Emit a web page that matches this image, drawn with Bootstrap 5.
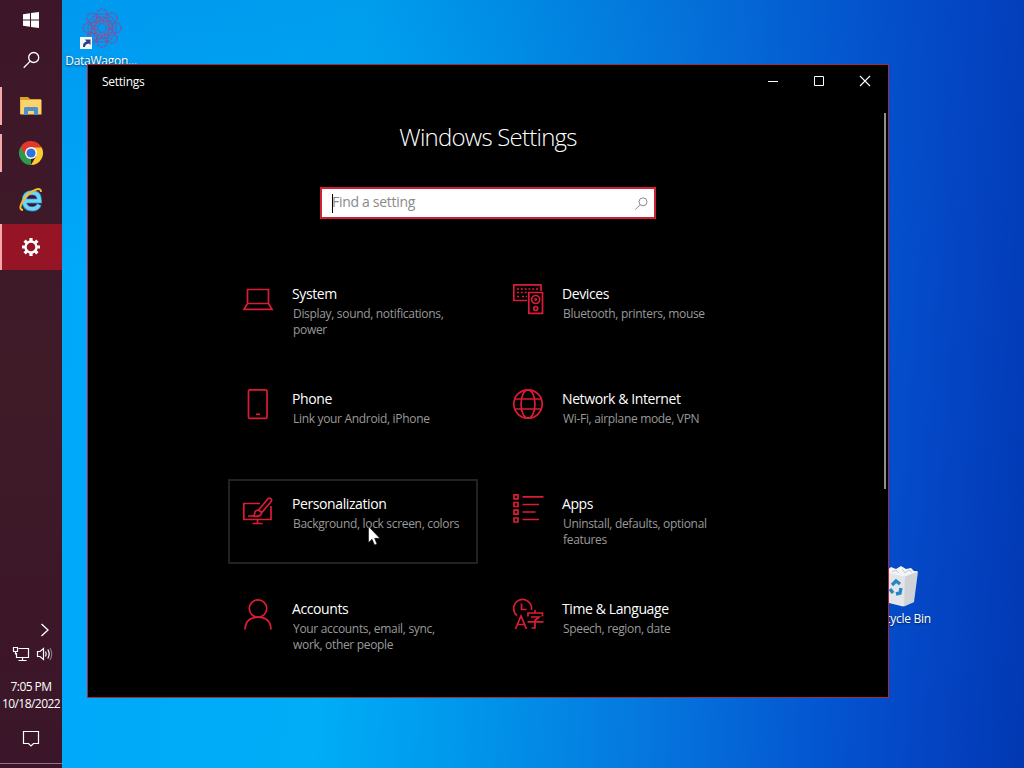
<!DOCTYPE html>
<html lang="en">
  <head>
    <meta charset="UTF-8" />
    <meta name="viewport" content="width=device-width, initial-scale=1.0" />
    <title>Windows Settings</title>
    <link
      href="https://cdn.jsdelivr.net/npm/bootstrap@5.3.0/dist/css/bootstrap.min.css"
      rel="stylesheet"
    />
    <style>
      body {
        height: 768px;
        font-family: "Open Sans", "Noto Sans", "Liberation Sans", sans-serif;
        font-size: 12px;
        line-height: 16px;
        color: #fff;
        background: #0a6fe0;
      }
      svg {
        display: block;
        flex: none;
        overflow: visible;
      }

      /* taskbar */
      .taskbar {
        width: 62px;
        background: linear-gradient(#3d1729, #3f1a27 50%, #3b1529);
      }
      .task-item {
        height: 46px;
        margin-top: 1px;
      }
      .task-start,
      .task-search {
        height: 40px;
      }
      .task-search {
        margin-bottom: 2px;
      }
      .task-open {
        background: linear-gradient(#f7a8a8, #f7a8a8) no-repeat left center / 2px 38px;
      }
      .task-active {
        background: linear-gradient(to right, #f7a8a8 2px, #951526 2px);
      }
      .tray-icons {
        padding-top: 9px;
      }
      .tray-clock {
        line-height: 17px;
        letter-spacing: -0.55px;
        padding-top: 16px;
        margin-bottom: -2px;
        white-space: nowrap;
      }
      .tray-line {
        height: 1px;
        background: #8c7480;
        margin-bottom: 4px;
      }

      /* desktop */
      .desktop {
        background:
          linear-gradient(to bottom, rgba(0, 60, 180, 0.14), rgba(0, 60, 180, 0) 35%),
          linear-gradient(94deg, #00a8fa 0%, #00adf6 30%, #0098ec 44%, #0578de 62%, #0455d0 80%, #0445c4 90%, #0238b2 100%);
      }
      .desk-icon {
        width: 78px;
        letter-spacing: -0.25px;
        text-shadow: 0 1px 2px rgba(0, 0, 0, 0.6);
      }
      .desk-app {
        left: 0;
        top: 7px;
      }
      .desk-bin {
        left: 800px;
        top: 563px;
      }

      /* settings window */
      .win {
        left: 25px;
        top: 64px;
        width: 802px;
        height: 634px;
        background: #000;
        border: 1px solid #a62844;
      }
      .win-bar {
        height: 32px;
        padding-left: 14px;
        letter-spacing: -0.25px;
      }
      .win-name {
        padding-top: 2px;
      }
      .win-btn {
        width: 46px;
        height: 32px;
      }
      .win-scroll {
        right: 2px;
        top: 48px;
        width: 2px;
        height: 376px;
        background: #8f8f8f;
      }
      .win-title {
        font-size: 24px;
        font-weight: 300;
        line-height: 32px;
        letter-spacing: -0.77px;
        margin: 24px 0 34px;
      }
      .find-box {
        width: 336px;
        height: 32px;
        background: #fff;
        border: 2px solid #cf2036;
        padding: 0 6px 0 10px;
        font-size: 14px;
        line-height: 18px;
        letter-spacing: -0.3px;
        color: #8a8a8a;
      }
      .find-hint {
        padding-bottom: 2px;
        margin-left: -1px;
      }
      .find-caret {
        width: 1px;
        height: 19px;
        background: #000;
      }
      .tiles {
        display: grid;
        grid-template-columns: 249px 249px;
        grid-auto-rows: 84px;
        gap: 21px;
        margin: 51px 0 0 141px;
      }
      .tile {
        padding: 14px 0 0 14px;
        column-gap: 19px;
      }
      .tile-hover {
        border: 2px solid #222;
        margin: -1px 0 0 -1px;
        padding: 13px 0 0 13px;
      }
      .tile svg {
        fill: none;
        stroke: #dc1b35;
        stroke-width: 1.7;
      }
      .tile-name {
        font-size: 14px;
        line-height: 20px;
        letter-spacing: -0.4px;
        margin-bottom: 2px;
      }
      .tile-text {
        color: #999;
        letter-spacing: -0.32px;
        padding-left: 1px;
      }
      .pointer {
        left: 280px;
        top: 461px;
      }
    </style>
  </head>
  <body class="d-flex overflow-hidden">
    <!-- Taskbar -->
    <nav class="taskbar d-flex flex-column flex-shrink-0">
      <div class="task-start d-flex align-items-center justify-content-center">
        <svg width="16" height="16" viewBox="0 0 16 16" fill="#fff">
          <path d="M0 2.3 7 1.3V7.5H0ZM8 1.1 16 0V7.5H8ZM0 8.5H7V14.7L0 13.7ZM8 8.5H16V16L8 14.9Z" />
        </svg>
      </div>
      <div class="task-search d-flex align-items-center justify-content-center">
        <svg width="17" height="17" viewBox="0 0 17 17" fill="none" stroke="#fff" stroke-width="1.3">
          <circle cx="10.7" cy="5.500" r="5" />
          <path d="M7.2 9.100.7 15.700" />
        </svg>
      </div>
      <div class="task-item task-open d-flex align-items-center justify-content-center">
        <svg width="22" height="20" viewBox="0 0 22 20">
          <path d="M0 1H8L10 3H21V18H0Z" fill="#d9a02c" />
          <path d="M1 4H21.500V18.500H.5V4Z" fill="#fad36b" />
          <path d="M4 19V12.500Q4 11 5.500 11H16.500Q18 11 18 12.500V19H14V15H8V19Z" fill="#4a8fce" />
        </svg>
      </div>
      <div class="task-item task-open d-flex align-items-center justify-content-center">
        <svg width="24" height="24" viewBox="0 0 24 24">
          <path d="M12 12V24A12 12 0 0 1 1.600 6Z" fill="#2c9a48" />
          <path d="M12 6H22.400A12 12 0 0 1 12 24L17.200 15Z" fill="#fbcb32" />
          <path d="M12 6.500H22.600A12 12 0 0 0 1.600 6L6.800 15Z" fill="#e2382c" />
          <circle cx="12" cy="12" r="6" fill="#fff" />
          <circle cx="12" cy="12" r="4.600" fill="#2f72dd" />
        </svg>
      </div>
      <div class="task-item d-flex align-items-center justify-content-center">
        <svg width="24" height="24" viewBox="0 0 24 24" fill="none">
          <path d="M5.500 13H20.500Q20.500 4.500 13 4.500Q5 5 5 13Q5.500 21 13 21Q18.500 21 20.300 16.500" stroke="#1e7fc0" stroke-width="5" />
          <path d="M6 13H20.500Q20.500 4.700 13 4.700Q5.300 5 5.200 13Q5.700 20.800 13 20.800Q18.300 20.800 20 16.700" stroke="#71d3f5" stroke-width="3.700" />
          <path d="M4 22Q-1 21.500 3.500 13.500Q8.500 5 16 2Q22-.5 22 4" stroke="#f2bd26" stroke-width="2" />
        </svg>
      </div>
      <div class="task-item task-active d-flex align-items-center justify-content-center">
        <svg width="20" height="20" viewBox="0 0 20 20" fill="none" stroke="#fff">
          <circle cx="10" cy="10" r="5.500" stroke-width="2.400" />
          <path d="M10 1V4M10 16V19M1 10H4M16 10H19M3.600 3.600 5.800 5.800M14.200 14.200 16.400 16.400M3.600 16.400 5.800 14.200M14.200 5.800 16.400 3.600" stroke-width="3.200" />
        </svg>
      </div>

      <div class="mt-auto d-flex justify-content-end pe-2 me-1">
        <svg width="10" height="14" viewBox="0 0 10 14" fill="none" stroke="#fff" stroke-width="1.300">
          <path d="M1.500 1 8 7 1.500 13" />
        </svg>
      </div>
      <div class="tray-icons d-flex align-items-center ps-2 ms-1">
        <svg width="18" height="16" viewBox="0 0 18 16" fill="none" stroke="#fff" stroke-width="1.200">
          <path d="M6.500 2.500H16.500V11.500H4.500V7M10.500 11.500V14.500M6.500 14.500H14.500" />
          <path d="M1.500 1.500H5.500V5.500H1.500ZM3.500 5.500V8.500" />
        </svg>
        <svg class="ms-1" width="20" height="16" viewBox="-1 0 20 16" fill="none" stroke="#fff" stroke-width="1.200">
          <path d="M2.500 5.500H5L8.500 2.500V13.500L5 10.500H2.500Z" />
          <path d="M10.500 5.500Q12 8 10.500 10.500M12.800 3.500Q15.500 8 12.800 12.500" />
          <path d="M15 2Q18.500 8 15 14" stroke="#8c7480" />
        </svg>
      </div>
      <div class="tray-clock text-center">
        <div>7:05 PM</div>
        <div>10/18/2022</div>
      </div>
      <div class="d-flex justify-content-center py-3">
        <svg class="mt-1" width="18" height="17" viewBox="0 0 18 17" fill="none" stroke="#fff" stroke-width="1.200">
          <path d="M1.500 1.500H16.500V13.500H11.500L9 16 6.500 13.500H1.500Z" />
        </svg>
      </div>
      <div class="tray-line"></div>
    </nav>

    <!-- Desktop -->
    <main class="desktop position-relative flex-grow-1 overflow-hidden">
      <div class="desk-icon desk-app position-absolute text-center">
        <svg class="mx-auto" width="46" height="46" viewBox="0 0 46 46" fill="none">
          <g stroke="#6a5cae" stroke-width="1.600" stroke-dasharray="2.500 1">
            <circle cx="24" cy="7" r="5" />
            <circle cx="34" cy="11" r="5" />
            <circle cx="38" cy="21" r="5" />
            <circle cx="34" cy="31" r="5" />
            <circle cx="24" cy="35" r="5" />
            <circle cx="14" cy="31" r="5" />
            <circle cx="10" cy="21" r="5" />
            <circle cx="14" cy="11" r="5" />
            <circle cx="24" cy="21" r="14" />
            <circle cx="24" cy="21" r="11" />
            <circle cx="24" cy="21" r="7.500" stroke="#94508c" stroke-width="2.500" />
            <circle cx="24" cy="21" r="4.500" />
          </g>
          <path d="M2 30H14V42H2Z" fill="#f4f6fa" />
          <path d="M5 40Q4.500 35.500 8.500 34.500L7 32.500H12.500V38L10.800 36.500Q7 37 7 40Z" fill="#24467e" />
        </svg>
        <div class="text-nowrap">DataWagon...</div>
      </div>

      <div class="desk-icon desk-bin position-absolute text-center">
        <svg class="mx-auto" width="40" height="48" viewBox="0 0 40 48">
          <path d="M4 9 36 8 32.500 39 22 43.500 8 40Z" fill="#e3e5e8" />
          <path d="M24 13 37 8.500 33 39 23 43.500Z" fill="#cfd3d8" />
          <path d="M4 9 10 4 15 6 20 3 25 6 30 5 33 8 37 8.500 24 13.500Z" fill="#f3f4f6" />
          <path d="M11 9 15 7 18 10M21 6 24 10 28 7 31 9" fill="none" stroke="#c5c9cf" />
          <path d="M11 22 15 18 19 21M20 25 19 30 15 31M12 30 9 26" fill="none" stroke="#2587c9" stroke-width="3.400" />
        </svg>
        <div class="text-nowrap">Recycle Bin</div>
      </div>

      <!-- Settings window -->
      <section class="win position-absolute">
        <div class="win-bar d-flex align-items-center">
          <span class="win-name me-auto">Settings</span>
          <div class="win-btn d-flex align-items-center justify-content-center">
            <svg width="10" height="11" viewBox="0 0 10 11"><path d="M0 5.500H10" stroke="#fff" /></svg>
          </div>
          <div class="win-btn d-flex align-items-center justify-content-center">
            <svg width="10" height="10" viewBox="0 0 10 10"><path d="M.5.500H9.500V9.500H.5Z" fill="none" stroke="#fff" /></svg>
          </div>
          <div class="win-btn d-flex align-items-center justify-content-center">
            <svg width="10" height="10" viewBox="0 0 10 10"><path d="M0 0 10 10M10 0 0 10" stroke="#fff" stroke-width="1.100" /></svg>
          </div>
        </div>
        <div class="win-scroll position-absolute"></div>

        <h1 class="win-title text-center">Windows Settings</h1>
        <div class="find-box d-flex align-items-center mx-auto">
          <span class="find-caret"></span>
          <span class="find-hint me-auto">Find a setting</span>
          <svg width="13" height="13" viewBox="0 0 13 13" fill="none" stroke="#8a8a8a">
            <circle cx="8" cy="4.800" r="4" />
            <path d="M5 7.800.3 12.600" />
          </svg>
        </div>

        <div class="tiles">
          <div class="tile d-flex align-items-start">
            <svg width="30" height="30" viewBox="0 0 30 30">
              <path d="M4.500 5.500H25.500V19.500H4.500ZM4.500 19.500 1 25.300H29L25.500 19.500" />
            </svg>
            <div>
              <div class="tile-name">System</div>
              <div class="tile-text">Display, sound, notifications,<br />power</div>
            </div>
          </div>
          <div class="tile d-flex align-items-start">
            <svg width="30" height="30" viewBox="0 0 30 30">
              <path d="M14 16.500H.8V.8H28V7" />
              <path d="M4 5H26M4 8.500H15M4 12.500H7M9 12.500H14" stroke-dasharray="2 1.800" />
              <path d="M15.800 8.500H29.500V29.300H15.800Z" />
              <circle cx="22.700" cy="15.500" r="4" />
              <circle cx="22.700" cy="15.500" r=".6" />
              <circle cx="22.700" cy="24.500" r="2" />
            </svg>
            <div>
              <div class="tile-name">Devices</div>
              <div class="tile-text">Bluetooth, printers, mouse</div>
            </div>
          </div>
          <div class="tile d-flex align-items-start">
            <svg width="30" height="30" viewBox="0 0 30 30">
              <rect x="5.500" y=".8" width="18.500" height="28.600" rx="1.500" />
              <path d="M13 25.300H17" />
            </svg>
            <div>
              <div class="tile-name">Phone</div>
              <div class="tile-text">Link your Android, iPhone</div>
            </div>
          </div>
          <div class="tile d-flex align-items-start">
            <svg width="30" height="30" viewBox="0 0 30 30">
              <circle cx="15" cy="15" r="14.200" />
              <ellipse cx="15" cy="15" rx="7" ry="14.200" />
              <path d="M2 10H28M2 20H28" />
            </svg>
            <div>
              <div class="tile-name">Network &amp; Internet</div>
              <div class="tile-text">Wi-Fi, airplane mode, VPN</div>
            </div>
          </div>
          <div class="tile tile-hover d-flex align-items-start">
            <svg width="30" height="30" viewBox="0 -3 30 30">
              <path d="M17 6.500H.8V22.500H28V9M14.500 22.500V26.300M9.500 26.500H19.500M5 19H11" />
              <path d="M15.500 13 24.800 2Q26.500.5 28 1.800Q29.200 3.200 28 4.800L18.800 15.500ZM15.500 13Q11.500 13.500 11.700 16.500Q11.500 18.500 9.500 19Q18 20.500 18.800 15.500" />
            </svg>
            <div>
              <div class="tile-name">Personalization</div>
              <div class="tile-text text-nowrap">Background, lock screen, colors</div>
            </div>
          </div>
          <div class="tile d-flex align-items-start">
            <svg width="30" height="30" viewBox="0 0 30 30">
              <path d="M1 .8H5V4.800H1ZM1 8.500H5V12.500H1ZM1 16.200H5V20.200H1ZM1 24H5V28H1Z" />
              <path d="M9.500 2.800H30.500M9.500 10.500H26M9.500 18H22.500M9.500 25.500H26" />
            </svg>
            <div>
              <div class="tile-name">Apps</div>
              <div class="tile-text">Uninstall, defaults, optional<br />features</div>
            </div>
          </div>
          <div class="tile d-flex align-items-start">
            <svg width="30" height="31" viewBox="0 0 30 31">
              <circle cx="15" cy="9.500" r="8.700" />
              <path d="M2 30.500Q2.500 18.300 15 18.200Q27.500 18.300 28 30.500" />
            </svg>
            <div>
              <div class="tile-name">Accounts</div>
              <div class="tile-text">Your accounts, email, sync,<br />work, other people</div>
            </div>
          </div>
          <div class="tile d-flex align-items-start">
            <svg width="30" height="31" viewBox="0 0 30 31">
              <path d="M4 16.500A9 9 0 1 1 18.500 11M8.500 4.500V10.500H13.500" />
              <path d="M2.500 30 8 17 13.500 30M4.500 25.500H11.500" />
              <path d="M22 11V14M15 17.500V14H29.500V17.500M18 18H26L22 21.500V29H18.500M14.500 22.800H30.500" />
            </svg>
            <div>
              <div class="tile-name">Time &amp; Language</div>
              <div class="tile-text">Speech, region, date</div>
            </div>
          </div>
        </div>

        <svg class="pointer position-absolute" width="13" height="20" viewBox="0 0 13 20">
          <path d="M.5.500V16.500L4 13.200 6.500 19 9 18 6.600 12.300H11.800Z" fill="#fff" stroke="#000" stroke-width=".5" />
        </svg>
      </section>
    </main>

    <!-- Bootstrap JS -->
    <script src="https://cdn.jsdelivr.net/npm/bootstrap@5.3.0/dist/js/bootstrap.bundle.min.js"></script>
  </body>
</html>
